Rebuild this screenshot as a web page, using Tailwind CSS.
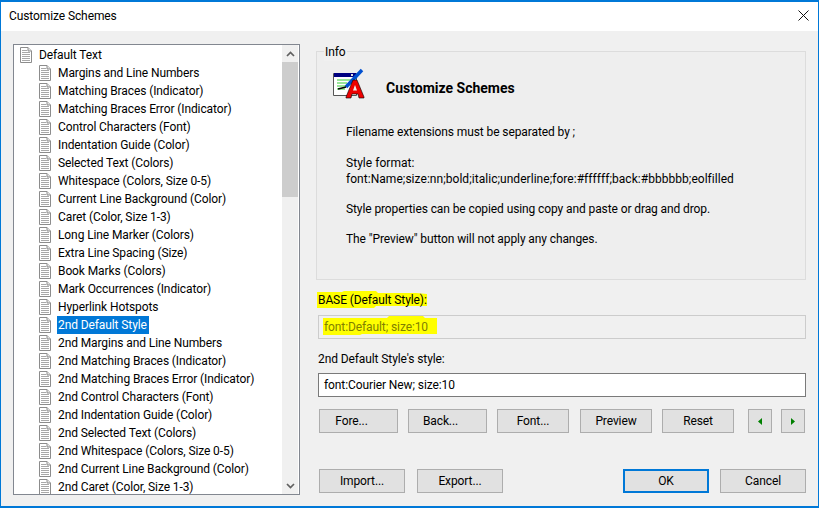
<!doctype html>
<html lang="en">
<head>
<meta charset="utf-8">
<script src="https://cdn.jsdelivr.net/npm/@tailwindcss/browser@4"></script>
<title>Customize Schemes</title>
</head>
<body class="m-0 bg-[#f0f0f0]">
<svg width="0" height="0" class="absolute">
  <symbol id="doc" viewBox="0 0 12 16">
    <path d="M.5.5H8L11.5 4V15.5H.5Z" fill="#fff" stroke="#8c8c8c"/>
    <path d="M8 .5V4H11.5" fill="#e4e4e4" stroke="#8c8c8c"/>
    <path d="M2 3.5H7M2 5.5H10M2 7.5H10M2 9.5H10M2 11.5H10M2 13.5H10" stroke="#a8a8a8" fill="none"/>
  </symbol>
</svg>
<div class="w-[819px] h-[508px] overflow-hidden flex flex-col border border-[#0078d7] border-t-2 border-b-2 font-['Roboto',sans-serif] text-[12px] leading-[18px] tracking-[-0.1px] text-black">
  <header class="h-[29px] shrink-0 bg-white flex items-center justify-between pl-[8px] pr-[8px]">
    <span class="text-[12px] relative top-[-1px]">Customize Schemes</span>
    <svg width="11" height="11" viewBox="0 0 11 11" class="mr-[1px] relative top-[-1px]"><path d="M.5.5L10.5 10.5M10.5.5L.5 10.5" stroke="#111" fill="none"/></svg>
  </header>
  <main class="flex-1 flex pt-[13px] pl-[12px] items-start">
    <div class="w-[287px] h-[451px] shrink-0 border border-[#828790] bg-white flex overflow-hidden">
      <ul class="flex-1 pt-[1px] overflow-hidden whitespace-nowrap">
        <li class="h-[18px] flex items-center gap-[7px] pl-[6px]"><svg class="w-[12px] h-[16px] shrink-0"><use href="#doc"/></svg><span>Default Text</span></li>
        <li class="h-[18px] flex items-center gap-[7px] pl-[25px]"><svg class="w-[12px] h-[16px] shrink-0"><use href="#doc"/></svg><span>Margins and Line Numbers</span></li>
        <li class="h-[18px] flex items-center gap-[7px] pl-[25px]"><svg class="w-[12px] h-[16px] shrink-0"><use href="#doc"/></svg><span>Matching Braces (Indicator)</span></li>
        <li class="h-[18px] flex items-center gap-[7px] pl-[25px]"><svg class="w-[12px] h-[16px] shrink-0"><use href="#doc"/></svg><span>Matching Braces Error (Indicator)</span></li>
        <li class="h-[18px] flex items-center gap-[7px] pl-[25px]"><svg class="w-[12px] h-[16px] shrink-0"><use href="#doc"/></svg><span>Control Characters (Font)</span></li>
        <li class="h-[18px] flex items-center gap-[7px] pl-[25px]"><svg class="w-[12px] h-[16px] shrink-0"><use href="#doc"/></svg><span>Indentation Guide (Color)</span></li>
        <li class="h-[18px] flex items-center gap-[7px] pl-[25px]"><svg class="w-[12px] h-[16px] shrink-0"><use href="#doc"/></svg><span>Selected Text (Colors)</span></li>
        <li class="h-[18px] flex items-center gap-[7px] pl-[25px]"><svg class="w-[12px] h-[16px] shrink-0"><use href="#doc"/></svg><span>Whitespace (Colors, Size 0-5)</span></li>
        <li class="h-[18px] flex items-center gap-[7px] pl-[25px]"><svg class="w-[12px] h-[16px] shrink-0"><use href="#doc"/></svg><span>Current Line Background (Color)</span></li>
        <li class="h-[18px] flex items-center gap-[7px] pl-[25px]"><svg class="w-[12px] h-[16px] shrink-0"><use href="#doc"/></svg><span>Caret (Color, Size 1-3)</span></li>
        <li class="h-[18px] flex items-center gap-[7px] pl-[25px]"><svg class="w-[12px] h-[16px] shrink-0"><use href="#doc"/></svg><span>Long Line Marker (Colors)</span></li>
        <li class="h-[18px] flex items-center gap-[7px] pl-[25px]"><svg class="w-[12px] h-[16px] shrink-0"><use href="#doc"/></svg><span>Extra Line Spacing (Size)</span></li>
        <li class="h-[18px] flex items-center gap-[7px] pl-[25px]"><svg class="w-[12px] h-[16px] shrink-0"><use href="#doc"/></svg><span>Book Marks (Colors)</span></li>
        <li class="h-[18px] flex items-center gap-[7px] pl-[25px]"><svg class="w-[12px] h-[16px] shrink-0"><use href="#doc"/></svg><span>Mark Occurrences (Indicator)</span></li>
        <li class="h-[18px] flex items-center gap-[7px] pl-[25px]"><svg class="w-[12px] h-[16px] shrink-0"><use href="#doc"/></svg><span>Hyperlink Hotspots</span></li>
        <li class="h-[18px] flex items-center gap-[6px] pl-[25px]"><svg class="w-[12px] h-[16px] shrink-0"><use href="#doc"/></svg><span class="bg-[#0078d7] text-white pl-[1px] pr-[2px]">2nd Default Style</span></li>
        <li class="h-[18px] flex items-center gap-[7px] pl-[25px]"><svg class="w-[12px] h-[16px] shrink-0"><use href="#doc"/></svg><span>2nd Margins and Line Numbers</span></li>
        <li class="h-[18px] flex items-center gap-[7px] pl-[25px]"><svg class="w-[12px] h-[16px] shrink-0"><use href="#doc"/></svg><span>2nd Matching Braces (Indicator)</span></li>
        <li class="h-[18px] flex items-center gap-[7px] pl-[25px]"><svg class="w-[12px] h-[16px] shrink-0"><use href="#doc"/></svg><span>2nd Matching Braces Error (Indicator)</span></li>
        <li class="h-[18px] flex items-center gap-[7px] pl-[25px]"><svg class="w-[12px] h-[16px] shrink-0"><use href="#doc"/></svg><span>2nd Control Characters (Font)</span></li>
        <li class="h-[18px] flex items-center gap-[7px] pl-[25px]"><svg class="w-[12px] h-[16px] shrink-0"><use href="#doc"/></svg><span>2nd Indentation Guide (Color)</span></li>
        <li class="h-[18px] flex items-center gap-[7px] pl-[25px]"><svg class="w-[12px] h-[16px] shrink-0"><use href="#doc"/></svg><span>2nd Selected Text (Colors)</span></li>
        <li class="h-[18px] flex items-center gap-[7px] pl-[25px]"><svg class="w-[12px] h-[16px] shrink-0"><use href="#doc"/></svg><span>2nd Whitespace (Colors, Size 0-5)</span></li>
        <li class="h-[18px] flex items-center gap-[7px] pl-[25px]"><svg class="w-[12px] h-[16px] shrink-0"><use href="#doc"/></svg><span>2nd Current Line Background (Color)</span></li>
        <li class="h-[18px] flex items-center gap-[7px] pl-[25px]"><svg class="w-[12px] h-[16px] shrink-0"><use href="#doc"/></svg><span>2nd Caret (Color, Size 1-3)</span></li>
      </ul>
      <div class="w-[16px] shrink-0 mr-[1px] bg-[#f0f0f0] flex flex-col">
        <div class="h-[17px] flex items-center justify-center"><svg width="9" height="6" viewBox="0 0 9 6"><path d="M1 5L4.500 1.500L8 5" stroke="#606060" stroke-width="1.700" fill="none"/></svg></div>
        <div class="h-[135px] bg-[#cdcdcd]"></div>
        <div class="flex-1"></div>
        <div class="h-[17px] flex items-center justify-center"><svg width="9" height="6" viewBox="0 0 9 6"><path d="M1 1L4.500 4.500L8 1" stroke="#606060" stroke-width="1.700" fill="none"/></svg></div>
      </div>
    </div>

    <section class="w-[490px] ml-[16px] shrink-0 flex flex-col">
      <div class="relative mt-[7px] h-[229px] border border-[#dcdcdc] bg-[#eeeeee] pl-[29px]">
        <span class="absolute left-[7px] top-[-9px] px-[1px] bg-[#f0f0f0]">Info</span>
        <div class="flex items-end gap-[21px] -ml-[13px] mt-[16px] h-[32px]">
          <svg width="32" height="32" viewBox="0 0 32 32" class="shrink-0">
            <path d="M.5 5.500H23.500V27.500H.5Z" fill="#fff" stroke="#555"/>
            <rect x="1" y="5" width="22" height="4" fill="#000080"/>
            <rect x="18" y="6" width="2" height="2" fill="#ddd"/>
            <path d="M4 12H18M4 15H14M4 18H14M4 21H12" stroke="#33cc33"/>
            <path d="M13 19L29 2" stroke="#0050d0" stroke-width="3.500" fill="none"/>
            <path d="M5 21L9 20L13 19" stroke="#000" stroke-width="1.500" fill="none"/>
            <path d="M13 29L20 12H24L31 29V30H26L25 26H19L18 30H13Z" fill="#ee0000" stroke="#000" stroke-width=".6"/>
            <path d="M20 22.500H24L22 17Z" fill="#eee"/>
          </svg>
          <h1 class="font-bold text-[14px] tracking-normal relative top-[-3px]">Customize Schemes</h1>
        </div>
        <div class="mt-[24px] flex flex-col gap-[14px] leading-[16px]">
          <p>Filename extensions must be separated by ;</p>
          <p class="mt-[1px] tracking-[0.04px]">Style format:<br>font:Name;size:nn;bold;italic;underline;fore:#ffffff;back:#bbbbbb;eolfilled</p>
          <p>Style properties can be copied using copy and paste or drag and drop.</p>
          <p>The "Preview" button will not apply any changes.</p>
        </div>
      </div>

      <div class="mt-[11px] ml-[2px] relative">
        <svg class="absolute left-[-2px] top-[0px]" width="112" height="18" viewBox="0 0 112 18"><path d="M1 1H26L28 0H60L62 2H100L111 3V15H60L58 17H1Z" fill="#ffff00"/></svg>
        <span class="relative">BASE (Default Style):</span>
      </div>
      <div class="mt-[6px] ml-[2px] h-[24px] border border-[#cccccc] bg-[#f0f0f0] flex items-center pl-[5px] relative">
        <svg class="absolute left-[3px] top-[0px]" width="116" height="20" viewBox="0 0 116 20"><path d="M1 2H65L67 0H101L103 2H115V18H40L38 19H1Z" fill="#ffff00"/></svg>
        <span class="relative text-[#7f7f00]">font:Default; size:10</span>
      </div>
      <label class="mt-[11px] ml-[2px]">2nd Default Style's style:</label>
      <div class="mt-[5px] ml-[2px] h-[24px] border border-[#7a7a7a] bg-white flex items-center pl-[5px]">font:Courier New; size:10</div>

      <div class="mt-[12px] ml-[3px] flex">
        <button class="w-[79px] h-[24px] border border-[#adadad] bg-[#e1e1e1] pr-[14px]">Fore...</button>
        <button class="ml-[10px] w-[79px] h-[24px] border border-[#adadad] bg-[#e1e1e1] pr-[14px]">Back...</button>
        <button class="ml-[10px] w-[72px] h-[24px] border border-[#adadad] bg-[#e1e1e1]">Font...</button>
        <button class="ml-[11px] w-[72px] h-[24px] border border-[#adadad] bg-[#e1e1e1]">Preview</button>
        <button class="ml-[10px] w-[72px] h-[24px] border border-[#adadad] bg-[#e1e1e1]">Reset</button>
        <button class="ml-[14px] w-[24px] h-[24px] border border-[#adadad] bg-[#e1e1e1] flex items-center justify-center"><svg width="4" height="7" viewBox="0 0 4 7"><path d="M4 0V7L0 3.500Z" fill="#008000"/></svg></button>
        <button class="ml-[9px] w-[24px] h-[24px] border border-[#adadad] bg-[#e1e1e1] flex items-center justify-center"><svg width="4" height="7" viewBox="0 0 4 7"><path d="M0 0V7L4 3.500Z" fill="#008000"/></svg></button>
      </div>

      <div class="mt-[36px] ml-[3px] flex">
        <button class="w-[86px] h-[24px] border border-[#adadad] bg-[#e1e1e1]">Import...</button>
        <button class="ml-[12px] w-[86px] h-[24px] border border-[#adadad] bg-[#e1e1e1]">Export...</button>
        <button class="ml-[120px] w-[86px] h-[24px] border-2 border-[#0078d7] bg-[#e1e1e1]">OK</button>
        <button class="ml-[11px] w-[86px] h-[24px] border border-[#adadad] bg-[#e1e1e1]">Cancel</button>
      </div>
    </section>
  </main>
</div>
</body>
</html>
